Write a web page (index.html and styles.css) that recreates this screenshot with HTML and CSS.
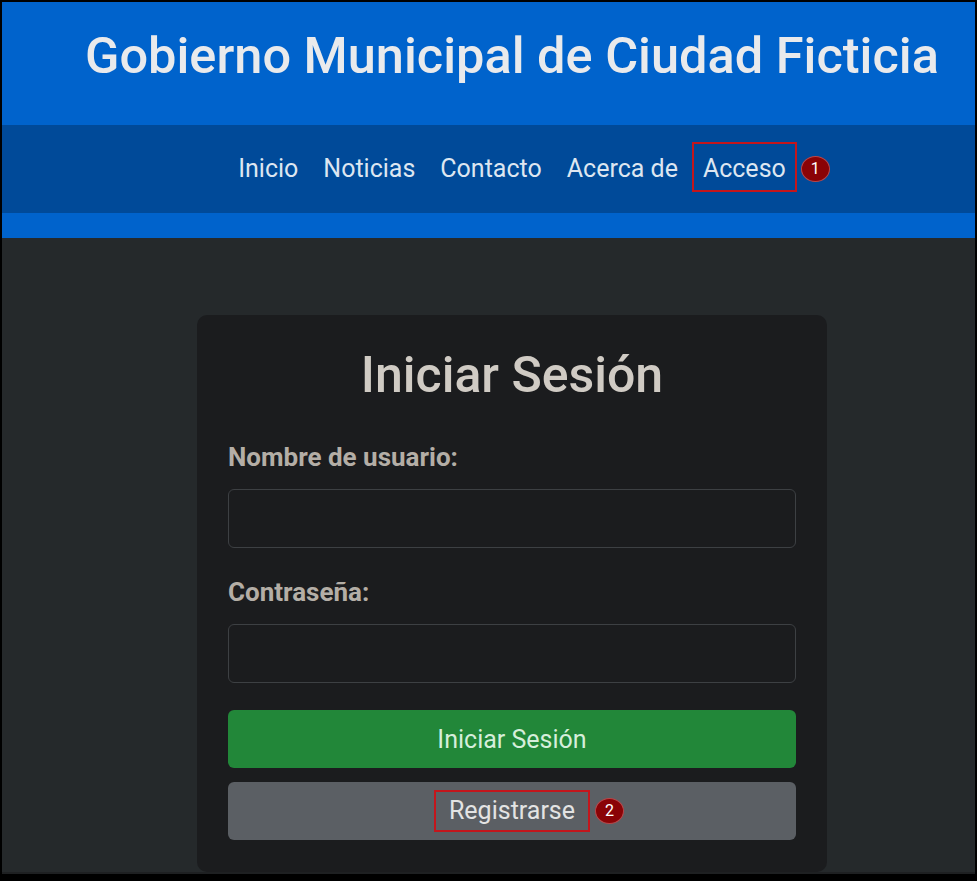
FILE: index.html
```html
<!DOCTYPE html>
<html lang="es">
<head>
    <meta charset="UTF-8">
    <meta name="viewport" content="width=device-width, initial-scale=1.0">
    <title>Acceso - Gobierno Municipal de Ciudad Ficticia</title>
    <link rel="stylesheet" href="styles.css">
</head>
<body>
    <div class="frame">
        <div class="page">
            <header class="cabecera">
                <h1>Gobierno Municipal de Ciudad Ficticia</h1>
            </header>

            <nav class="menu">
                <a href="#">Inicio</a>
                <a href="#">Noticias</a>
                <a href="#">Contacto</a>
                <a href="#">Acerca de</a>
                <span class="marca">
                    <a href="#" class="resaltado">Acceso</a>
                    <span class="globo globo-menu">1</span>
                </span>
            </nav>
            <div class="franja"></div>

            <main class="contenido">
                <div class="tarjeta">
                    <h2>Iniciar Sesión</h2>
                    <form>
                        <div class="grupo">
                            <label for="usuario">Nombre de usuario:</label>
                            <input type="text" id="usuario">
                        </div>
                        <div class="grupo">
                            <label for="clave">Contraseña:</label>
                            <input type="password" id="clave">
                        </div>
                        <button type="submit" class="btn btn-verde">Iniciar Sesión</button>
                        <button type="button" class="btn btn-gris">
                            <span class="marca">
                                <span class="resaltado">Registrarse</span>
                                <span class="globo globo-boton">2</span>
                            </span>
                        </button>
                    </form>
                </div>
            </main>
        </div>
    </div>
</body>
</html>
```

FILE: styles.css
```css
* {
    box-sizing: border-box;
}
body {
    margin: 0;
    background: #000;
    font-family: Roboto, "Liberation Sans", Arial, sans-serif;
}
.frame {
    width: 977px;
    height: 881px;
    border: 2px solid #000;
    border-bottom-width: 7px;
    overflow: hidden;
    background: #1e2022;
}
.page {
    width: 1020px;
    height: 870px;
    display: flex;
    flex-direction: column;
    background: #25292b;
}

/* cabecera */
.cabecera {
    background: #0063cc;
    height: 123px;
    padding-top: 24px;
    text-align: center;
}
.cabecera h1 {
    margin: 0;
    font-size: 50.5px;
    font-weight: 500;
    line-height: 1.2;
    color: #e9eaec;
}

/* menu */
.menu {
    background: #004a99;
    height: 88px;
    padding-bottom: 4px;
    display: flex;
    justify-content: center;
    align-items: center;
    gap: 5px;
}
.menu a {
    color: #dde6f1;
    text-decoration: none;
    font-size: 25px;
    line-height: 1.5;
    padding: 7px 10px 3px;
}
.franja {
    background: #0063cc;
    height: 25px;
}

/* marcas rojas */
.marca {
    position: relative;
    display: inline-block;
}
.resaltado {
    display: inline-block;
    outline: 2px solid #c4161c;
    outline-offset: -1px;
}
.globo {
    position: absolute;
    top: 50%;
    width: 29px;
    height: 26px;
    margin-top: -13px;
    border-radius: 50%;
    background: #8a0306;
    border: 1px solid #b8474a;
    color: #fff;
    font-size: 16px;
    line-height: 24px;
    text-align: center;
}
.globo-menu {
    right: -34px;
    margin-top: -11px;
}
.globo-boton {
    right: -35px;
}

/* contenido */
.contenido {
    flex: 1;
    padding-top: 77px;
}
.tarjeta {
    width: 630px;
    margin: 0 auto;
    background: #1b1c1e;
    border-radius: 10px;
    padding: 30px 31px 32px;
}
.tarjeta h2 {
    margin: 0 0 33px;
    text-align: center;
    font-size: 50px;
    font-weight: 500;
    line-height: 1.2;
    color: #d0cbc4;
}
.grupo {
    margin-bottom: 25px;
}
.grupo label {
    display: block;
    font-size: 26px;
    font-weight: 700;
    line-height: 1.5;
    color: #b4aea6;
    margin-bottom: 12px;
}
.grupo input {
    display: block;
    width: 100%;
    height: 59px;
    background: #1b1c1e;
    border: 1px solid #3d4043;
    border-radius: 6px;
    color: #ddd;
    font-size: 24px;
    padding: 0 18px;
}
.btn {
    display: block;
    width: 100%;
    height: 58px;
    border: none;
    border-radius: 6px;
    font-family: inherit;
    font-size: 25px;
    cursor: pointer;
}
.btn-verde {
    background: #228739;
    color: #d6eedb;
    margin-top: 27px;
}
.btn-gris {
    background: #5b5f64;
    color: #e3e3e3;
    margin-top: 14px;
}
.btn-gris .resaltado {
    line-height: 1.3;
    padding: 4px 14px;
}
```
